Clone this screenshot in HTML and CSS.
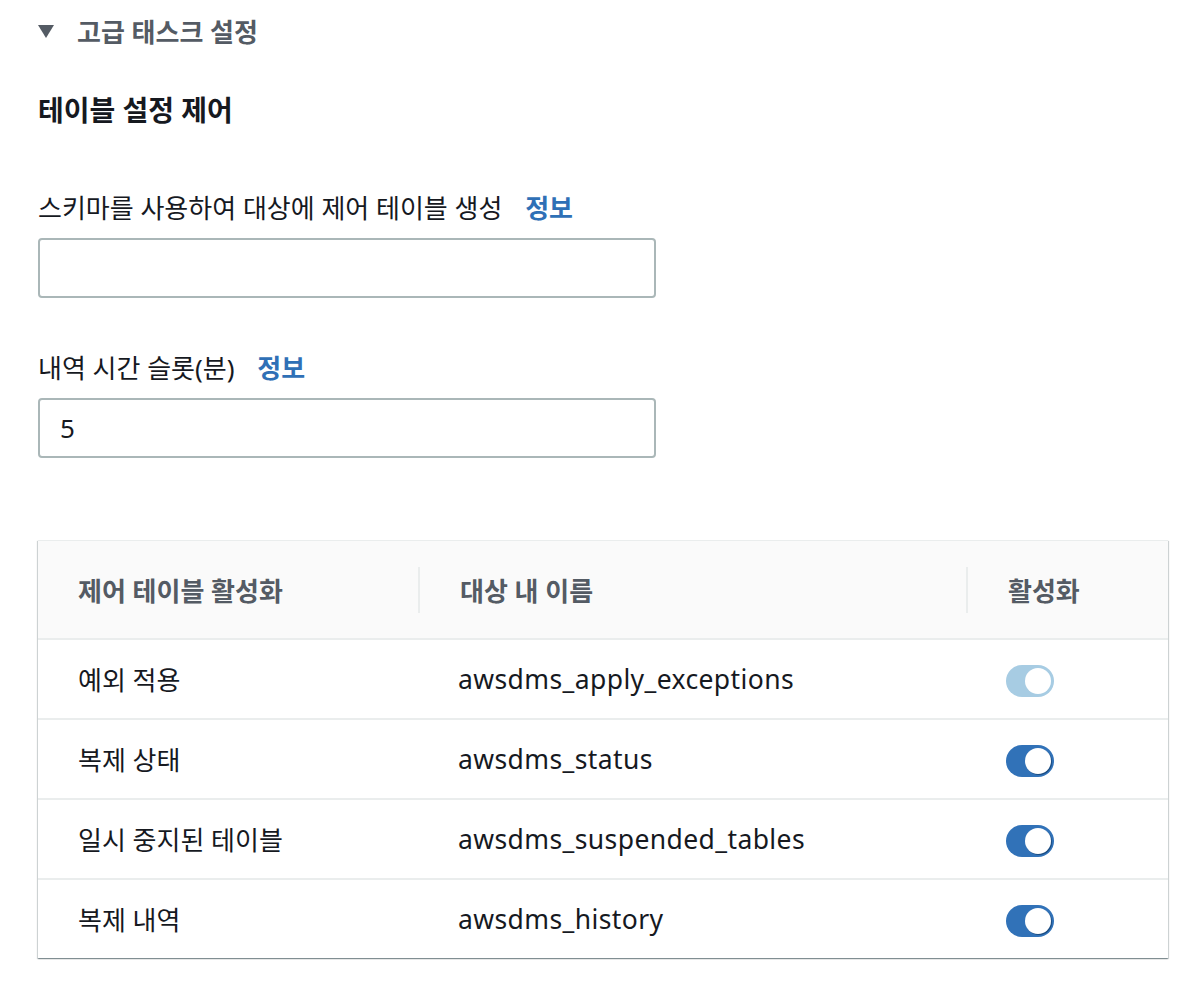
FILE: index.html
```html
<html lang="ko">
<head>
    <meta charset="UTF-8">
    <meta name="viewport" content="width=device-width, initial-scale=1.0">
    <title>고급 태스크 설정</title>
    <link rel="stylesheet" href="styles.css">
</head>
<body>

    <div class="page">
        <div class="expander">
            <span class="caret"></span>
            <span class="expander-title">고급 태스크 설정</span>
        </div>

        <h3 class="section-title">테이블 설정 제어</h3>

        <div class="field">
            <label class="field-label">스키마를 사용하여 대상에 제어 테이블 생성 <a class="info" href="#">정보</a></label>
            <input class="text-input" type="text" value="">
        </div>

        <div class="field">
            <label class="field-label">내역 시간 슬롯(분) <a class="info" href="#">정보</a></label>
            <input class="text-input" type="text" value="5">
        </div>

        <div class="table-box">
            <div class="table-row table-head">
                <div class="cell">제어 테이블 활성화</div>
                <div class="cell cell-divider">대상 내 이름</div>
                <div class="cell cell-divider">활성화</div>
            </div>
            <div class="table-row">
                <div class="cell">예외 적용</div>
                <div class="cell cell-name">awsdms_apply_exceptions</div>
                <div class="cell"><span class="toggle toggle-disabled"><span class="knob"></span></span></div>
            </div>
            <div class="table-row">
                <div class="cell">복제 상태</div>
                <div class="cell cell-name">awsdms_status</div>
                <div class="cell"><span class="toggle"><span class="knob"></span></span></div>
            </div>
            <div class="table-row">
                <div class="cell">일시 중지된 테이블</div>
                <div class="cell cell-name">awsdms_suspended_tables</div>
                <div class="cell"><span class="toggle"><span class="knob"></span></span></div>
            </div>
            <div class="table-row">
                <div class="cell">복제 내역</div>
                <div class="cell cell-name">awsdms_history</div>
                <div class="cell"><span class="toggle"><span class="knob"></span></span></div>
            </div>
        </div>
    </div>

</body>
</html>
```

FILE: styles.css
```css
/* Basic Reset */
* {
    margin: 0;
    padding: 0;
    box-sizing: border-box;
}

body {
    font-family: "Noto Sans", "Noto Sans CJK KR", sans-serif;
    font-size: 26px;
    color: #16191f;
    background-color: #fff;
}

.page {
    padding: 12px 22px 0 38px;
}

/* Expander header */
.expander {
    display: flex;
    align-items: center;
    gap: 23px;
    height: 38px;
}

.caret {
    width: 0;
    height: 0;
    border-left: 8px solid transparent;
    border-right: 8px solid transparent;
    border-top: 13px solid #545b64;
}

.expander-title {
    font-size: 26px;
    font-weight: bold;
    color: #545b64;
}

/* Section title */
.section-title {
    font-size: 28px;
    font-weight: bold;
    margin-top: 42px;
    line-height: 36px;
}

/* Form fields */
.field {
    margin-top: 62px;
}

.field + .field {
    margin-top: 52px;
}

.field-label {
    display: block;
    line-height: 36px;
    margin-bottom: 12px;
}

.info {
    color: #2f70b6;
    font-weight: bold;
    text-decoration: none;
    margin-left: 16px;
}

.text-input {
    display: block;
    width: 618px;
    height: 60px;
    border: 2px solid #aab7b8;
    border-radius: 4px;
    padding: 0 20px;
    font-family: inherit;
    font-size: 26px;
    color: #16191f;
}

/* Table */
.table-box {
    margin-top: 82px;
    width: 1130px;
    border-top: 1px solid #eaeded;
    box-shadow: 0 1px 1px 0 rgba(0, 28, 36, 0.3), 1px 1px 1px 0 rgba(0, 28, 36, 0.15), -1px 1px 1px 0 rgba(0, 28, 36, 0.15);
}

.table-row {
    display: grid;
    grid-template-columns: 380px 548px 1fr;
    height: 80px;
    border-top: 2px solid #eaeded;
    align-items: center;
}

.table-head {
    height: 97px;
    border-top: none;
    background-color: #fafafa;
    color: #545b64;
    font-weight: bold;
}

.cell {
    padding-left: 40px;
    display: flex;
    align-items: center;
}

.cell-name {
    font-size: 26.5px;
    letter-spacing: 0.4px;
}

.cell-divider {
    height: 46px;
    border-left: 2px solid #eaeded;
}

/* Toggle switch */
.toggle {
    display: inline-block;
    position: relative;
    width: 48px;
    height: 32px;
    margin-top: 4px;
    border-radius: 16px;
    background-color: #3172b8;
}

.toggle-disabled {
    background-color: #a7cce3;
}

.knob {
    position: absolute;
    top: 3px;
    right: 3px;
    width: 26px;
    height: 26px;
    border-radius: 50%;
    background-color: #fff;
    box-shadow: 1px 1px 0 0 rgba(0, 28, 60, 0.45);
}

.toggle-disabled .knob {
    box-shadow: none;
}
```
